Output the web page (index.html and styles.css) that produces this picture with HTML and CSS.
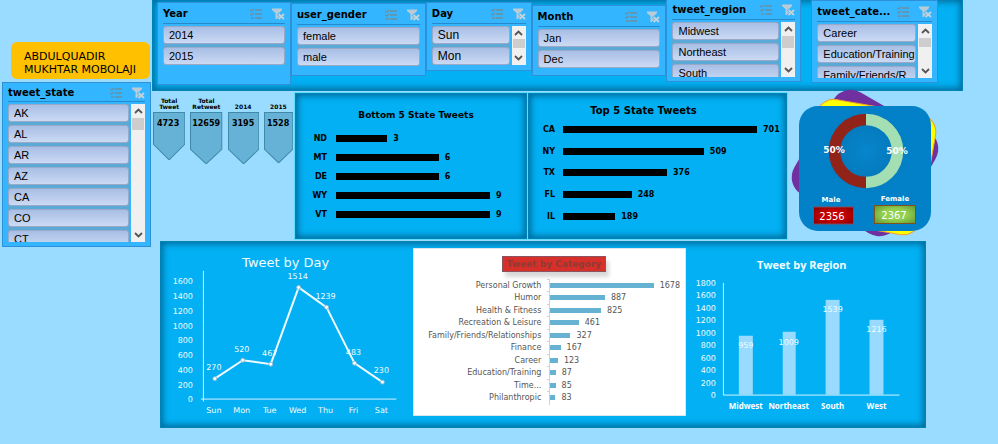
FILE: index.html
```html
<!DOCTYPE html>
<html lang="en">
<head>
<meta charset="utf-8">
<title>Tweet dashboard</title>
<meta name="viewport" content="width=device-width, initial-scale=1">
<link rel="stylesheet" href="styles.css">
</head>
<body>
<svg class="sprite" aria-hidden="true">
  <symbol id="multi" viewBox="0 0 13 11">
    <path d="M5 1.500h7M5 5.500h7M5 9.500h7" stroke="#6f8ea0" stroke-width="1.400" fill="none"/>
    <path d="M0 1.500l1.500 1L4 0.500M0 5.500l1.500 1L4 4.500M1 9.500h3" stroke="#6f8ea0" stroke-width="1.300" fill="none"/>
  </symbol>
  <symbol id="clear" viewBox="0 0 13 12">
    <path d="M0 0.500h10v1.500L7 5v6H3.500V5L0 2z" fill="#b9cbd6"/>
    <path d="M6 5.500l6 6M12 5.500l-6 6" stroke="#33b5ff" stroke-width="3"/>
    <path d="M6.500 6l5.500 5M12 6l-5.500 5" stroke="#c3d3dc" stroke-width="1.900"/>
  </symbol>
  <symbol id="up" viewBox="0 0 9 6"><path d="M1 5l3.500-3.500L8 5" stroke="#555" stroke-width="1.800" fill="none"/></symbol>
  <symbol id="down" viewBox="0 0 9 6"><path d="M1 1l3.500 3.500L8 1" stroke="#555" stroke-width="1.800" fill="none"/></symbol>
</svg>

<div class="dashboard">
  <aside class="side">
    <p class="author">ABDULQUADIR<br>MUKHTAR MOBOLAJI</p>
    <section class="slicer state">
      <header><h2>tweet_state</h2><svg class="ic"><use href="#multi"/></svg><svg class="ic"><use href="#clear"/></svg></header>
      <div class="body">
        <div class="items"><button>AK</button><button>AL</button><button>AR</button><button>AZ</button><button>CA</button><button>CO</button><button>CT</button></div>
        <div class="scroll"><svg><use href="#up"/></svg><i></i><svg><use href="#down"/></svg></div>
      </div>
    </section>
  </aside>

  <main class="main">
    <div class="panel filters">
      <section class="slicer year">
        <header><h2>Year</h2><svg class="ic"><use href="#multi"/></svg><svg class="ic"><use href="#clear"/></svg></header>
        <div class="body"><div class="items"><button>2014</button><button>2015</button></div></div>
      </section>
      <section class="slicer gender">
        <header><h2>user_gender</h2><svg class="ic"><use href="#multi"/></svg><svg class="ic"><use href="#clear"/></svg></header>
        <div class="body"><div class="items"><button>female</button><button>male</button></div></div>
      </section>
      <section class="slicer day">
        <header><h2>Day</h2><svg class="ic"><use href="#multi"/></svg><svg class="ic"><use href="#clear"/></svg></header>
        <div class="body">
          <div class="items"><button>Sun</button><button>Mon</button></div>
          <div class="scroll"><svg><use href="#up"/></svg><i></i><svg><use href="#down"/></svg></div>
        </div>
      </section>
      <section class="slicer month">
        <header><h2>Month</h2><svg class="ic"><use href="#multi"/></svg><svg class="ic"><use href="#clear"/></svg></header>
        <div class="body"><div class="items"><button>Jan</button><button>Dec</button></div></div>
      </section>
      <section class="slicer region">
        <header><h2>tweet_region</h2><svg class="ic"><use href="#multi"/></svg><svg class="ic"><use href="#clear"/></svg></header>
        <div class="body">
          <div class="items"><button>Midwest</button><button>Northeast</button><button>South</button></div>
          <div class="scroll"><svg><use href="#up"/></svg><i></i><svg><use href="#down"/></svg></div>
        </div>
      </section>
      <section class="slicer category">
        <header><h2>tweet_cate...</h2><svg class="ic"><use href="#multi"/></svg><svg class="ic"><use href="#clear"/></svg></header>
        <div class="body">
          <div class="items"><button>Career</button><button>Education/Training</button><button>Family/Friends/R</button></div>
          <div class="scroll"><svg><use href="#up"/></svg><i></i><svg><use href="#down"/></svg></div>
        </div>
      </section>
    </div>

    <div class="middle">
      <div class="totals">
        <div class="total"><h3>Total<br>Tweet</h3>
          <svg viewBox="0 0 32 48"><path d="M.5.5h31V32L16 47.500.5 32z"/><text x="15" y="14">4723</text></svg></div>
        <div class="total"><h3>Total<br>Retweet</h3>
          <svg viewBox="0 0 32 52"><path d="M.5.5h31V37L16 51.500.5 37z"/><text x="16" y="14">12659</text></svg></div>
        <div class="total"><h3>2014</h3>
          <svg viewBox="0 0 31 52"><path d="M.5.5h30V37L15.500 51.500.5 37z"/><text x="15" y="14">3195</text></svg></div>
        <div class="total"><h3>2015</h3>
          <svg viewBox="0 0 29 51"><path d="M.5.5h28V37L14.500 50.500.5 37z"/><text x="14" y="14">1528</text></svg></div>
      </div>

      <section class="panel states bottom5">
        <h2>Bottom 5 State Tweets</h2>
        <ul class="bars">
          <li><span>ND</span><i style="--v:3"></i><b>3</b></li>
          <li><span>MT</span><i style="--v:6"></i><b>6</b></li>
          <li><span>DE</span><i style="--v:6"></i><b>6</b></li>
          <li><span>WY</span><i style="--v:9"></i><b>9</b></li>
          <li><span>VT</span><i style="--v:9"></i><b>9</b></li>
        </ul>
      </section>

      <section class="panel states top5">
        <h2>Top 5 State Tweets</h2>
        <ul class="bars">
          <li><span>CA</span><i style="--v:701"></i><b>701</b></li>
          <li><span>NY</span><i style="--v:509"></i><b>509</b></li>
          <li><span>TX</span><i style="--v:376"></i><b>376</b></li>
          <li><span>FL</span><i style="--v:248"></i><b>248</b></li>
          <li><span>IL</span><i style="--v:189"></i><b>189</b></li>
        </ul>
      </section>

      <svg class="genders" viewBox="0 0 150 146" role="img" aria-label="Tweets by gender">
        <defs>
          <radialGradient id="glow"><stop offset="0" stop-color="#0a88d0"/><stop offset=".6" stop-color="#0676b6"/><stop offset="1" stop-color="#0281c8"/></radialGradient>
          <radialGradient id="red" r=".75"><stop offset=".4" stop-color="#c40000"/><stop offset="1" stop-color="#7c0000"/></radialGradient>
          <radialGradient id="green" r=".75"><stop offset=".4" stop-color="#92d050"/><stop offset="1" stop-color="#5d8c2c"/></radialGradient>
        </defs>
        <rect x="16" y="11" width="118" height="118" rx="20" fill="#7030a0" transform="rotate(30 75 70)"/>
        <rect x="18" y="13" width="121" height="122" rx="18" fill="#ffff00" stroke="#f0a030" transform="rotate(10 78 74)"/>
        <rect x="9" y="13" width="132" height="125" rx="19" fill="#0281c8"/>
        <circle cx="76" cy="58" r="44" fill="url(#glow)" opacity=".6"/>
        <path d="M76 26.500a31.500 31.500 0 0 0 0 63" fill="none" stroke="#922318" stroke-width="11.500"/>
        <path d="M76 26.500a31.500 31.500 0 0 1 0 63" fill="none" stroke="#a3dfb3" stroke-width="11.500"/>
        <g class="pct"><text x="44" y="60">50%</text><text x="107" y="61">50%</text></g>
        <g class="sex"><text x="41" y="109">Male</text><text x="105" y="108">Female</text></g>
        <rect x="23.500" y="114" width="40" height="17" fill="url(#red)" stroke="#8a4a5a"/>
        <rect x="84.500" y="112.500" width="41" height="18" fill="url(#green)" stroke="#80501c"/>
        <g class="num"><text x="42" y="127">2356</text><text x="104" y="126">2367</text></g>
      </svg>
    </div>

    <div class="panel charts">
      <svg class="plot" viewBox="0 1 253 185" role="img" aria-label="Tweet by Day">
        <text class="day-title" x="125" y="26">Tweet by Day</text>
        <g class="ticks">
          <text x="32" y="43">1600</text><text x="32" y="58">1400</text><text x="32" y="73">1200</text><text x="32" y="88">1000</text><text x="32" y="102">800</text><text x="32" y="117">600</text><text x="32" y="132">400</text><text x="32" y="147">200</text><text x="32" y="161">0</text>
        </g>
        <path class="axis" d="M42.500 30V161M40 158.500H236"/>
        <polyline class="trend" points="54,138 82,119.500 110,123.500 138,46.500 166,66.500 194,122.500 222,141.500"/>
        <g class="dots"><circle cx="54" cy="138" r="2"/><circle cx="82" cy="119.500" r="2"/><circle cx="110" cy="123.500" r="2"/><circle cx="138" cy="46.500" r="2"/><circle cx="166" cy="66.500" r="2"/><circle cx="194" cy="122.500" r="2"/><circle cx="222" cy="141.500" r="2"/></g>
        <g class="mid">
          <text x="53" y="129">270</text><text x="81" y="111">520</text><text x="109" y="115">467</text><text x="137" y="38">1514</text><text x="165" y="58">1239</text><text x="193" y="114">483</text><text x="221" y="132">230</text>
          <text x="53" y="172">Sun</text><text x="81" y="172">Mon</text><text x="109" y="172">Tue</text><text x="137" y="172">Wed</text><text x="165" y="172">Thu</text><text x="193" y="172">Fri</text><text x="221" y="172">Sat</text>
        </g>
      </svg>

      <section class="categories">
        <h2>Tweet by Category</h2>
        <ul class="bars">
          <li><span>Personal Growth</span><i style="--v:1678"></i><b>1678</b></li>
          <li><span>Humor</span><i style="--v:887"></i><b>887</b></li>
          <li><span>Health &amp; Fitness</span><i style="--v:825"></i><b>825</b></li>
          <li><span>Recreation &amp; Leisure</span><i style="--v:461"></i><b>461</b></li>
          <li><span>Family/Friends/Relationships</span><i style="--v:327"></i><b>327</b></li>
          <li><span>Finance</span><i style="--v:167"></i><b>167</b></li>
          <li><span>Career</span><i style="--v:123"></i><b>123</b></li>
          <li><span>Education/Training</span><i style="--v:87"></i><b>87</b></li>
          <li><span>Time...</span><i style="--v:85"></i><b>85</b></li>
          <li><span>Philanthropic</span><i style="--v:83"></i><b>83</b></li>
        </ul>
      </section>

      <svg class="plot" viewBox="0 1 240 185" role="img" aria-label="Tweet by Region">
        <text class="region-title" x="116" y="28">Tweet by Region</text>
        <g class="ticks">
          <text x="30" y="45">1800</text><text x="30" y="57">1600</text><text x="30" y="70">1400</text><text x="30" y="82">1200</text><text x="30" y="95">1000</text><text x="30" y="107">800</text><text x="30" y="120">600</text><text x="30" y="132">400</text><text x="30" y="145">200</text><text x="30" y="157">0</text>
        </g>
        <g fill="#99dbff"><rect x="53" y="95" width="14" height="59"/><rect x="97" y="91" width="13" height="63"/><rect x="140" y="59" width="14" height="95"/><rect x="184" y="79" width="14" height="75"/></g>
        <path class="axis" d="M37.500 42V154.500H214"/>
        <g class="mid"><text x="60" y="107">959</text><text x="103" y="104">1009</text><text x="147" y="71">1539</text><text x="191" y="91">1216</text></g>
        <g class="names"><text x="60" y="168">Midwest</text><text x="103" y="168">Northeast</text><text x="147" y="168">South</text><text x="191" y="168">West</text></g>
      </svg>
    </div>
  </main>
</div>
</body>
</html>
```
FILE: styles.css
```css
* { box-sizing: border-box; }

body {
  margin: 0;
  background: #99dcff;
  color: #000;
  font-family: "DejaVu Sans", Verdana, sans-serif;
}

h2, h3, p, ul { margin: 0; padding: 0; }
ul { list-style: none; }
.sprite { display: none; }

.dashboard {
  display: grid;
  grid-template-columns: 152px 1fr;
}

/* Left column */
.side { padding: 42px 1px 0 2px; }

.author {
  margin: 0 1px 3px 9px;
  padding: 8px 0 3px 13px;
  border-radius: 6px;
  background: #ffc000;
  font-size: 11px;
  line-height: 13px;
  white-space: nowrap;
}

/* Slicers */
.slicer {
  min-width: 0;
  padding: 0 5px 4px;
  border: 1px solid #2e90d6;
  background: #33b5ff;
}

.slicer header {
  display: flex;
  align-items: center;
  gap: 9px;
  height: 21px;
  padding-top: 2px;
  border-bottom: 1px solid #2789cc;
}

.slicer h2 {
  flex: 1;
  min-width: 0;
  font-size: 10px;
  line-height: 14px;
  white-space: nowrap;
}

.ic { flex: none; width: 13px; height: 12px; }

.body { display: flex; gap: 2px; margin-top: 2px; overflow: hidden; }

.items {
  flex: 1;
  display: flex;
  flex-direction: column;
  gap: 3px;
  min-width: 0;
  background: #5aa9d6;
}

.items button {
  flex: none;
  height: 18px;
  padding: 0 5px;
  border: 1px solid #9aa9c8;
  border-radius: 3px;
  background: linear-gradient(#a8bee5, #cbdaf4);
  color: #000;
  font: 11px/16px "Liberation Sans", Arial, sans-serif;
  text-align: left;
  white-space: nowrap;
}

.scroll {
  flex: none;
  display: flex;
  flex-direction: column;
  align-items: center;
  width: 14px;
  padding: 4px 1px;
  background: #f0f0f0;
}
.scroll svg { flex: none; width: 9px; height: 6px; }
.scroll svg:last-child { margin-top: auto; }
.scroll i { width: 12px; height: 12px; margin-top: 4px; background: #cdcdcd; }

.state header { height: 19px; }
.state .body { height: 138px; }
.year { flex: 134; min-height: 83px; }
.gender { flex: 135; min-height: 73px; margin-top: 1px; }
.day { flex: 103; min-height: 69px; }
.month { flex: 135; min-height: 71px; margin-top: 3px; }
.region { flex: 135; margin-top: -4px; }
.category { flex: 126; margin: -2px 0 0 10px; }
.day .body { height: 39px; }
.day .scroll i { height: 9px; margin-top: 3px; }
.day button { font-size: 12px; }
.region .body { height: 55px; }
.category .body { height: 54px; }
.category .scroll i { height: 9px; }

/* Raised blue panels */
.panel {
  border: 1px solid #0083b8;
  background: #03b0f3;
  box-shadow: inset 0 0 6px 2px #006a98;
}

.filters {
  display: flex;
  align-items: flex-start;
  height: 91px;
  margin-right: 35px;
  padding: 2px 24px 0 4px;
  border-top: 0;
}

/* Totals, state bars and gender card */
.middle {
  display: grid;
  grid-template-columns: 143fr 233fr 260fr 150fr 60fr;
  height: 150px;
  padding-top: 2px;
}

.totals {
  display: grid;
  grid-template-columns: 32fr 32fr 31fr 29fr;
  column-gap: 5px;
  align-items: start;
  padding: 3px 2px 0 1px;
}

.total h3 {
  display: flex;
  align-items: flex-end;
  justify-content: center;
  height: 14px;
  margin-bottom: 2px;
  font-size: 6px;
  line-height: 6px;
  text-align: center;
}

.total svg { display: block; width: 100%; }
.total path { fill: #66b2d6; stroke: #4089ab; }
.total text { font-size: 8px; font-weight: bold; text-anchor: middle; }

.states { box-shadow: inset 0 0 6px 2px #006a98, 0 0 0 1px #5fdcff; height: 146px; margin-right: 1px; }
.states h2 { text-align: center; }

.bars li { display: flex; align-items: center; }
.bars span { flex: none; text-align: right; white-space: nowrap; }
.bars i { flex: none; }

.bottom5 { padding: 13px 0 0; --max: 9; }
.bottom5 h2 { padding-left: 10px; font-size: 9px; line-height: 16px; }
.bottom5 .bars { padding-top: 6px; }
.bottom5 li { height: 19px; }

.top5 { padding: 9px 0 0; --max: 701; }
.top5 h2 { padding-right: 28px; font-size: 10px; line-height: 16px; }
.top5 .bars { display: grid; grid-auto-rows: 1fr; height: 108px; }

.states li { font-size: 8px; font-weight: bold; }
.states span { width: 31px; margin-right: 9px; }
.states i { height: 7px; background: #000; }
.states b { margin-left: 6px; }
.bottom5 i { width: calc(var(--v) / var(--max) * (100% - 76px)); }
.top5 span { width: 26px; margin-right: 8px; }
.top5 i { width: calc(var(--v) / var(--max) * (100% - 63px)); }

.genders { width: 100%; margin-left: 2px; overflow: visible; text-anchor: middle; }
.genders text { fill: #fff; }
.pct { font-size: 9px; font-weight: bold; }
.sex { font-size: 7px; font-weight: bold; }
.num { font-size: 10px; }

/* Bottom charts */
.charts {
  display: grid;
  grid-template-columns: 253fr 273fr 240fr;
  margin: 0 72px 0 8px;
  align-items: start;
}

.plot { display: block; width: 100%; font-size: 8px; fill: #f2fcff; }
.day-title { font-size: 13px; text-anchor: middle; }
.region-title { font: bold 11px "Open Sans", sans-serif; text-anchor: middle; }
.ticks { text-anchor: end; }
.mid { text-anchor: middle; }
.names { font: bold 8px "Noto Sans", sans-serif; text-anchor: middle; fill: #fff; }
.axis { fill: none; stroke: #d5f3ff; }
.trend { fill: none; stroke: #effbff; stroke-width: 2; }
.dots { fill: #fff; stroke: #8fb8d0; stroke-width: 1; }

.categories {
  display: flex;
  flex-direction: column;
  margin-top: 6px;
  height: 168px;
  padding-top: 7px;
  border: 1px solid #d9e6ec;
  background: #fff;
  --max: 1678;
}

.categories h2 {
  align-self: center;
  width: 104px;
  margin: 0 0 7px 9px;
  border: 1px solid #8b5560;
  background: #d7302b;
  box-shadow: 3px 5px 4px #d8d8d8;
  color: #8e3b33;
  font-size: 9px;
  line-height: 14px;
  text-align: center;
  white-space: nowrap;
}

.categories .bars { display: grid; grid-auto-rows: 1fr; height: 125px; }
.categories li { color: #555; font-size: 8px; }
.categories span { width: 127px; }
.categories i {
  position: relative;
  width: calc(var(--v) / var(--max) * (100% - 167px));
  height: 5px;
  margin-left: 9px;
  background: #66b2d2;
}
.categories i::before {
  content: "";
  position: absolute;
  top: -4px;
  left: -3px;
  width: 2px;
  height: 13px;
  border: solid #d9cfcf;
  border-width: 1px 1px 0 0;
}
.categories b { margin-left: 6px; font-weight: normal; }
```
